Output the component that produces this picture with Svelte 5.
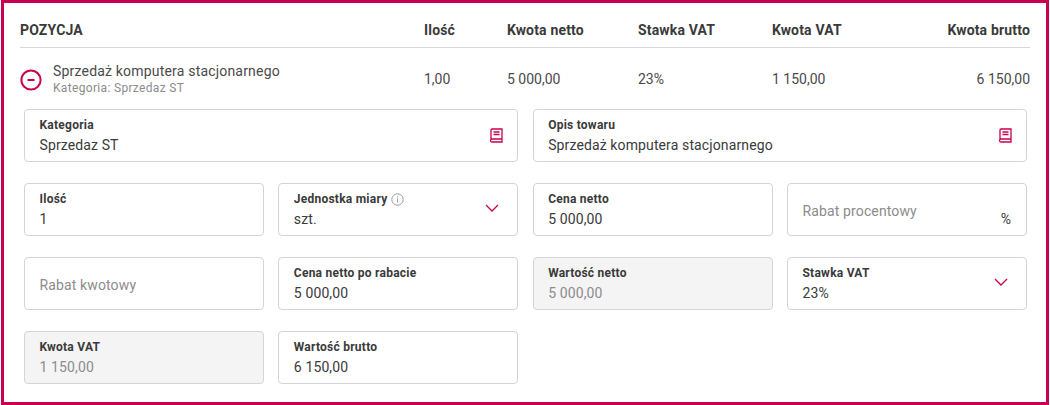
<script lang="ts">
  const COLUMNS = ['Ilość', 'Kwota netto', 'Stawka VAT', 'Kwota VAT'];
  const VALUES = ['1,00', '5 000,00', '23%', '1 150,00'];

  type Field = {
    label?: string;
    value?: string;
    placeholder?: string;
    icon?: 'book' | 'chevron';
    info?: boolean;
    suffix?: string;
    disabled?: boolean;
    wide?: boolean;
  };

  const FIELDS: Field[] = [
    { label: 'Kategoria', value: 'Sprzedaz ST', icon: 'book', wide: true },
    { label: 'Opis towaru', value: 'Sprzedaż komputera stacjonarnego', icon: 'book', wide: true },
    { label: 'Ilość', value: '1' },
    { label: 'Jednostka miary', value: 'szt.', icon: 'chevron', info: true },
    { label: 'Cena netto', value: '5 000,00' },
    { placeholder: 'Rabat procentowy', suffix: '%' },
    { placeholder: 'Rabat kwotowy' },
    { label: 'Cena netto po rabacie', value: '5 000,00' },
    { label: 'Wartość netto', value: '5 000,00', disabled: true },
    { label: 'Stawka VAT', value: '23%', icon: 'chevron' },
    { label: 'Kwota VAT', value: '1 150,00', disabled: true },
    { label: 'Wartość brutto', value: '6 150,00' },
  ];
</script>

<div class="frame">
  <div class="row head">
    <span>POZYCJA</span>
    {#each COLUMNS as c}<span>{c}</span>{/each}
    <span class="end">Kwota brutto</span>
  </div>

  <div class="row item">
    <div class="name">
      <svg class="toggle" width="22" height="22" viewBox="0 0 22 22" fill="none" stroke="#c8004f">
        <circle cx="11" cy="11" r="9.6" stroke-width="2" />
        <path d="M7.5 11h7" stroke-width="2" />
      </svg>
      <div>
        <div class="title">Sprzedaż komputera stacjonarnego</div>
        <div class="sub">Kategoria: Sprzedaz ST</div>
      </div>
    </div>
    {#each VALUES as v}<span>{v}</span>{/each}
    <span class="end">6 150,00</span>
  </div>

  <div class="fields">
    {#each FIELDS as f}
      <div class="field" class:wide={f.wide} class:disabled={f.disabled}>
        {#if f.placeholder}
          <span class="placeholder">{f.placeholder}</span>
        {:else}
          <span class="label">
            {f.label}
            {#if f.info}
              <svg width="13" height="13" viewBox="0 0 13 13" fill="none" stroke="#9a9a9a">
                <circle cx="6.5" cy="6.5" r="5.7" />
                <path d="M6.5 5.6v3.8M6.5 3.4v1.2" />
              </svg>
            {/if}
          </span>
          <span class="value">{f.value}</span>
        {/if}
        {#if f.suffix}<span class="suffix">{f.suffix}</span>{/if}
        {#if f.icon === 'book'}
          <svg class="book" width="14" height="15" viewBox="0 0 14 15" fill="none" stroke="#c8004f" stroke-width="1.3">
            <path d="M2 11V2a1 1 0 0 1 1-1h10v10H3a1.5 1.5 0 0 0 0 3h10v-3" />
            <path d="M4.5 4h6M4.5 6.5h6" />
          </svg>
        {:else if f.icon === 'chevron'}
          <svg class="chevron" width="14" height="8" viewBox="0 0 14 8" fill="none" stroke="#c8004f" stroke-width="1.3">
            <path d="M1 1l6 6 6-6" />
          </svg>
        {/if}
      </div>
    {/each}
  </div>
</div>

<style>
  :global(body) { margin: 0; background: #fff; }

  .frame {
    box-sizing: border-box;
    width: 1048px;
    height: 405px;
    margin-left: 1px;
    border: 3px solid #c8004f;
    padding: 0 16px;
    font-family: Roboto, sans-serif;
    color: #333;
  }

  .row {
    display: grid;
    grid-template-columns: 404px 83px 131px 134px 1fr auto;
    font-size: 14px;
  }

  .head {
    height: 45px;
    align-items: center;
    padding-top: 9px;
    box-sizing: border-box;
    border-bottom: 1px solid #d8d8d8;
    font-weight: 700;
    font-size: 14px;
    letter-spacing: 0.17px;
    color: #3a3a3a;
  }

  .item {
    height: 61px;
    align-items: center;
    color: #4a4a4a;
    padding-top: 1px;
    box-sizing: border-box;
  }

  .end { text-align: right; }

  .name { display: flex; align-items: center; gap: 11px; }
  .toggle { flex-shrink: 0; margin-top: 2px; }
  .title { font-size: 14px; line-height: 17px; letter-spacing: 0.19px; color: #4a4a4a; }
  .sub { font-size: 12px; line-height: 16px; letter-spacing: 0.33px; color: #8c8c8c; }

  .fields {
    display: grid;
    grid-template-columns: repeat(4, 240px);
    column-gap: 14.33px;
    row-gap: 21px;
    margin-left: 4px;
  }

  .field {
    position: relative;
    box-sizing: border-box;
    height: 53px;
    border: 1px solid #d4d4d4;
    border-radius: 4px;
    padding: 7px 15px 0 14.5px;
    display: flex;
    flex-direction: column;
    background: #fff;
  }

  .wide { grid-column: span 2; }
  .disabled { background: #f4f4f4; }
  .disabled .value { color: #8c8c8c; }

  .label {
    display: flex;
    align-items: center;
    gap: 4px;
    font-size: 12px;
    line-height: 16px;
    font-weight: 700;
    letter-spacing: 0.24px;
    color: #3a3a3a;
  }

  .value {
    font-size: 14px;
    line-height: 20px;
    margin-top: 2px;
    letter-spacing: 0.12px;
    color: #3a3a3a;
  }

  .placeholder {
    font-size: 14px;
    line-height: 20px;
    margin-top: 10px;
    letter-spacing: 0.13px;
    color: #8c8c8c;
  }

  .suffix {
    position: absolute;
    right: 15px;
    bottom: 8px;
    font-size: 14px;
    color: #3a3a3a;
  }

  .book { position: absolute; right: 14px; top: 18px; }
  .chevron { position: absolute; right: 18px; top: 20px; }
</style>
